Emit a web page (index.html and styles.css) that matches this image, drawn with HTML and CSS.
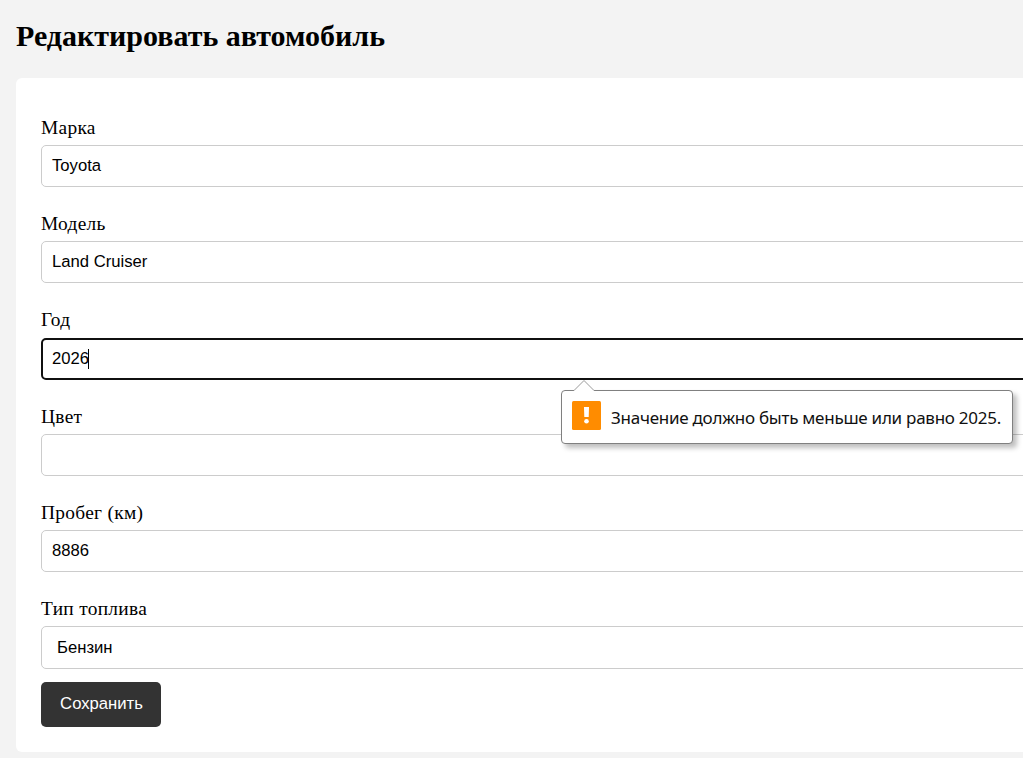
FILE: index.html
```html
<!DOCTYPE html>
<html lang="ru">
<head>
<meta charset="utf-8">
<title>Редактировать автомобиль</title>
<link rel="stylesheet" href="styles.css">
</head>
<body>
<main class="page">
  <h1 class="title">Редактировать автомобиль</h1>
  <form class="card">
    <div class="field"><label class="label">Марка</label><div class="input">Toyota</div></div>
    <div class="field"><label class="label">Модель</label><div class="input">Land Cruiser</div></div>
    <div class="field field-year"><label class="label">Год</label>
      <div class="input input-focus">2026<span class="caret"></span></div>
      <div class="tooltip" role="alert">
        <svg class="tip-arrow" width="22" height="12" viewBox="0 0 22 12"><path d="M1 11.5 L11 1.5 L21 11.5V12H1z" fill="#fff"/><path d="M1 11.5 L11 1.5 L21 11.5" fill="none" stroke="#999"/></svg>
        <svg class="tip-icon" width="29" height="29" viewBox="0 0 29 29"><rect width="29" height="29" rx="1.5" fill="#ff8c00"/><path d="M12 6h5l-.3 10h-4.4z" fill="#fff"/><circle cx="14.5" cy="20.2" r="2.3" fill="#fff"/></svg>
        <span class="tip-text">Значение должно быть меньше или равно 2025.</span>
      </div>
    </div>
    <div class="field"><label class="label">Цвет</label><div class="input"></div></div>
    <div class="field"><label class="label">Пробег (км)</label><div class="input">8886</div></div>
    <div class="field field-last"><label class="label">Тип топлива</label><div class="input input-select">Бензин</div></div>
    <button class="save" type="button">Сохранить</button>
  </form>
</main>
</body>
</html>
```
FILE: styles.css
```css
* { box-sizing: border-box; }
body { margin: 0; background: #f3f3f3; overflow: hidden; height: 758px; color: #000; font-family: "Liberation Serif", "Times New Roman", serif; }
.page { width: 1060px; padding: 18px 0 0 16px; }
.title { margin: 0; height: 60px; font-size: 30px; line-height: 36px; font-weight: 700; white-space: nowrap; }
.card { height: 674px; padding: 38px 25px 0; background: #fff; border-radius: 6px; }
.field { position: relative; height: 96px; }
.field-year { height: 97px; }
.field-year .label { height: 30px; }
.field-last { height: 85px; }
.label { display: block; height: 29px; font-size: 19.4px; line-height: 24px; letter-spacing: .3px; }
.input { height: 42px; padding: 0 10px 1px; display: flex; align-items: center; border: 1px solid #ccc; border-radius: 5px; font: 16.67px/20px "Liberation Sans", Arial, sans-serif; background: #fff; }
.input-focus { border: 2px solid #101010; padding: 0 9px; }
.input-select { height: 43px; padding: 0 15px; }
.caret { width: 1px; height: 20px; margin-left: -1px; background: #000; }
.save { display: block; width: 120px; height: 45px; padding: 0 0 2px 1px; border: 0; border-radius: 5px; background: #333; color: #fff; font: 16.67px "Liberation Sans", Arial, sans-serif; }
.tooltip { position: absolute; left: 520px; top: 82px; z-index: 2; width: 452px; height: 54px; display: flex; align-items: center; padding: 0 10px; gap: 10px; background: #fff; border: 1px solid #808080; border-radius: 4px; box-shadow: 4px 4px 5px rgba(0,0,0,.25); }
.tip-arrow { position: absolute; left: 11px; top: -12px; }
.tip-icon { flex: none; margin-bottom: 3px; }
.tip-text { padding-top: 2px; font: 17px/24px "Noto Sans", sans-serif; letter-spacing: -.26px; white-space: nowrap; color: #101010; }
```
